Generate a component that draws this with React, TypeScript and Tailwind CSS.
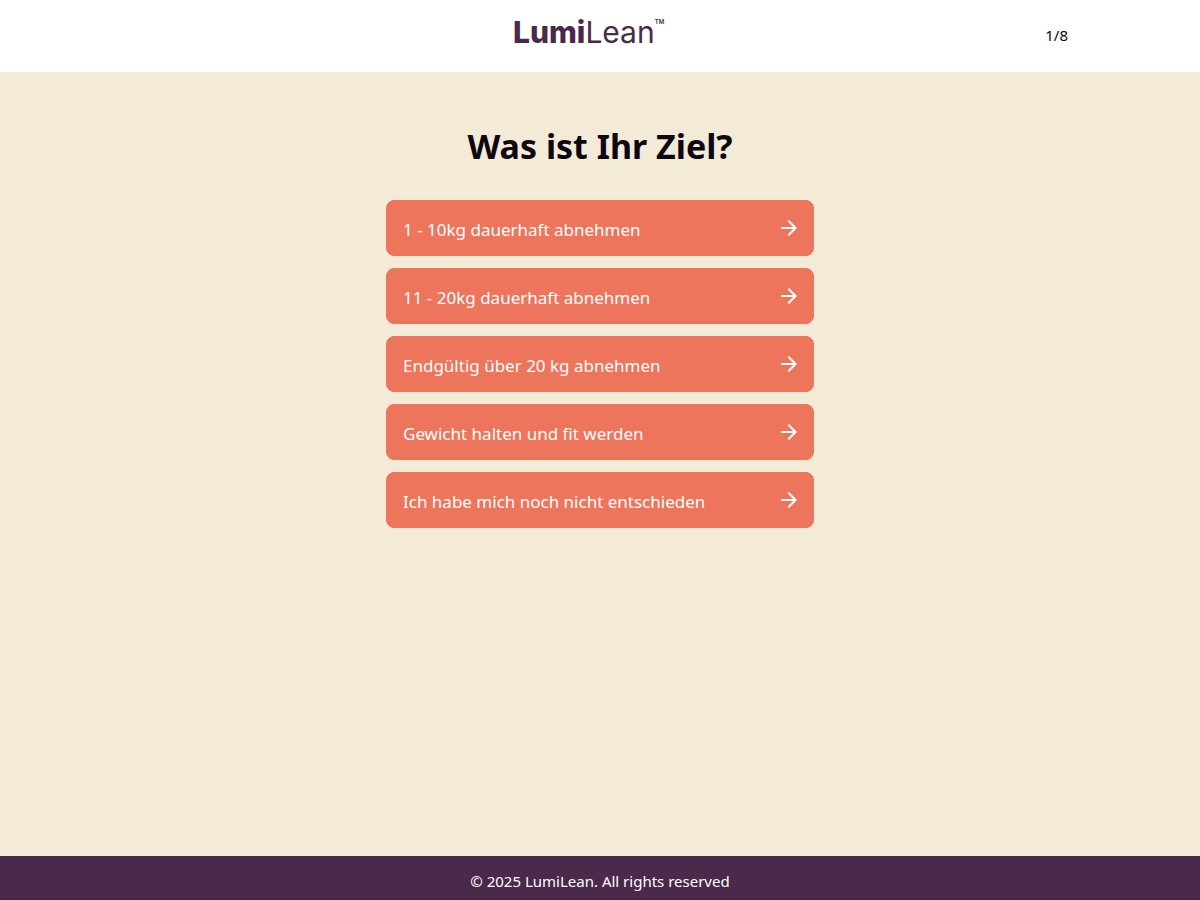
import { MdArrowForward } from "react-icons/md";

const options = [
  "1 - 10kg dauerhaft abnehmen",
  "11 - 20kg dauerhaft abnehmen",
  "Endgültig über 20 kg abnehmen",
  "Gewicht halten und fit werden",
  "Ich habe mich noch nicht entschieden",
];

function Logo() {
  return (
    <a
      href="#"
      aria-label="LumiLean"
      className="flex items-start font-['Inter',sans-serif] text-[30px] leading-8 text-[#4a294a]"
    >
      <span className="font-extrabold">Lumi</span>
      <span>Lean</span>
      <span className="pt-[2px] text-[6px] leading-2 font-semibold">TM</span>
    </a>
  );
}

export default function App() {
  return (
    <div className="flex min-h-screen flex-col bg-[#f3ead7] font-['Segoe_UI','Noto_Sans',sans-serif] text-[#0c0710]">
      <header className="bg-white">
        <div className="mx-auto flex h-[72px] max-w-[936px] items-start justify-between">
          <div />
          <div className="pt-4">
            <Logo />
          </div>
          <span className="pt-[23px] text-[15px] leading-6">1/8</span>
        </div>
      </header>

      <main className="mx-auto w-full max-w-[428px] flex-1 pt-12">
        <h1 className="text-center text-[34px] leading-[52px] font-bold whitespace-nowrap">
          Was ist Ihr Ziel?
        </h1>
        <div className="mt-7 flex flex-col gap-3">
          {options.map((option) => (
            <button
              key={option}
              type="button"
              className="flex h-14 items-center justify-between rounded-lg border border-[#ed755b] bg-[#ed755b] pr-3 pl-4 text-left text-[17px] text-white"
            >
              <span className="pt-1">{option}</span>
              <MdArrowForward size={24} />
            </button>
          ))}
        </div>
      </main>

      <footer className="h-11 border-b-2 border-[#44253f] bg-[#4a294a] pt-[13px] text-center text-[15px] leading-6 text-white">
        © 2025 LumiLean. All rights reserved
      </footer>
    </div>
  );
}
